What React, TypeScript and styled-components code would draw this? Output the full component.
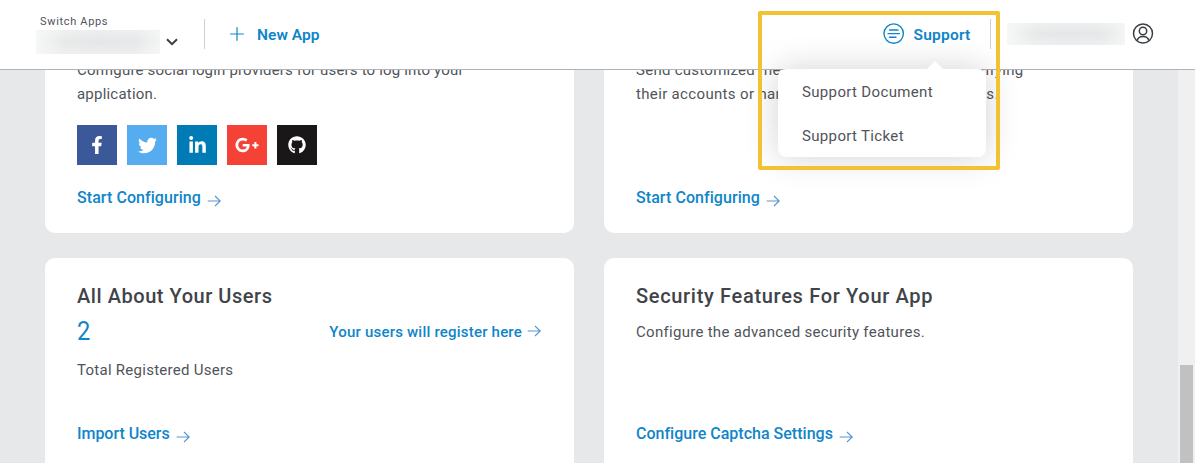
import React from "react";
import styled, { createGlobalStyle } from "styled-components";
import { FaFacebookF, FaTwitter, FaLinkedinIn, FaGooglePlusG, FaGithub } from "react-icons/fa";

const GlobalStyle = createGlobalStyle`
  * { box-sizing: border-box; }
  body {
    margin: 0;
    background: #e7e8ea;
    color: #50545a;
    font: 400 15px/24px Roboto, "Liberation Sans", sans-serif;
    overflow: hidden;
  }
`;

const Page = styled.div`
  height: 463px;
  display: flex;
  flex-direction: column;
  overflow: hidden;
  position: relative;
`;

const Header = styled.header`
  height: 70px;
  flex: none;
  display: flex;
  align-items: flex-start;
  background: #fff;
  border-bottom: 1px solid #b1b2b5;
  position: relative;
  z-index: 2;
`;

const AppSwitcher = styled.div`
  width: 204px;
  padding: 14px 0 0 36px;
  display: flex;
  flex-direction: column;
  flex: none;
`;

const SwitchLabel = styled.span`
  padding-left: 4px;
  font-size: 11px;
  line-height: 16px;
  letter-spacing: 0.67px;
  white-space: nowrap;
`;

const SwitchRow = styled.div`
  display: flex;
  align-items: center;
  gap: 6px;
`;

const Redacted = styled.div<{ $w: number; $h: number }>`
  width: ${(p) => p.$w}px;
  height: ${(p) => p.$h}px;
  flex: none;
  background:
    linear-gradient(180deg, rgba(247, 248, 248, 0.45), rgba(247, 248, 248, 0) 50%, rgba(247, 248, 248, 0.45)),
    linear-gradient(90deg, #f6f7f7, #e7e9e9 24%, #e5e6e8 50%, #e6e8e9 80%, #f3f4f4);
`;

const Divider = styled.div`
  width: 1px;
  height: 30px;
  margin-top: 19px;
  flex: none;
  background: #cfd0d2;
`;

const NavItem = styled.a<{ $gap: number; $track: number }>`
  display: flex;
  align-items: center;
  gap: ${(p) => p.$gap}px;
  height: 24px;
  margin-top: 22px;
  color: #0f85ca;
  font-size: 15.5px;
  font-weight: 600;
  letter-spacing: ${(p) => p.$track}px;
  white-space: nowrap;
  svg { flex: none; }
`;

const NavText = styled.span`
  padding-top: 1px;
`;

const NewApp = styled(NavItem)`
  margin-left: 25px;
`;

const HeaderRight = styled.div`
  margin-left: auto;
  padding-right: 41px;
  display: flex;
`;

const SupportSlot = styled.div`
  position: relative;
  width: 107px;
`;

const Account = styled.div`
  display: flex;
  gap: 7px;
  margin: 23px 0 0 16px;
`;

const Menu = styled.div`
  position: absolute;
  top: 69px;
  right: 4px;
  width: 208px;
  height: 88px;
  padding: 0 24px;
  display: flex;
  flex-direction: column;
  border-radius: 8px;
  background: #fff;
  box-shadow: 0 0 34px rgba(0, 0, 0, 0.18);
  &::before {
    content: "";
    position: absolute;
    top: -8px;
    left: 149px;
    border: solid transparent;
    border-width: 0 8px 8px;
    border-bottom-color: #fff;
  }
`;

const MenuItem = styled.a`
  height: 44px;
  line-height: 46px;
  letter-spacing: 0.34px;
  white-space: nowrap;
`;

const Highlight = styled.div`
  position: absolute;
  z-index: 3;
  left: 758px;
  top: 11px;
  width: 242px;
  height: 159px;
  border: 4px solid #f1c232;
  border-radius: 2px;
`;

const Body = styled.div`
  flex: 1;
  display: flex;
  min-height: 0;
`;

const Cards = styled.main`
  flex: 1;
  display: grid;
  grid-template-columns: 529px 529px;
  grid-template-rows: 163px 240px;
  gap: 25px 30px;
  padding-left: 45px;
  overflow: hidden;
`;

const Card = styled.section<{ $scrolled?: boolean }>`
  display: flex;
  flex-direction: column;
  padding: ${(p) => (p.$scrolled ? "0 32px 23px" : "26px 32px 52px")};
  background: #fff;
  border-radius: ${(p) => (p.$scrolled ? "0 0 10px 10px" : "10px")};
  overflow: hidden;
`;

const Title = styled.h2<{ $track: number }>`
  margin: 0;
  font-size: 20px;
  line-height: 24px;
  font-weight: 500;
  letter-spacing: ${(p) => p.$track}px;
  color: #404449;
`;

const ScrolledText = styled.div`
  margin-top: -12px;
  display: flex;
  flex-direction: column;
`;

const Line = styled.span<{ $track: number }>`
  letter-spacing: ${(p) => p.$track}px;
  white-space: nowrap;
`;

const Description = styled(Line)`
  margin-top: 12px;
`;

const Socials = styled.div`
  display: flex;
  gap: 10px;
  margin-top: 19px;
`;

const Social = styled.a<{ $bg: string }>`
  width: 40px;
  height: 40px;
  display: grid;
  place-items: center;
  background: ${(p) => p.$bg};
  color: #fff;
`;

const Action = styled.a<{ $track: number }>`
  margin-top: auto;
  display: flex;
  align-items: center;
  gap: 6px;
  color: #0f85ca;
  font-size: 16px;
  font-weight: 500;
  letter-spacing: ${(p) => p.$track}px;
  svg { position: relative; top: 3px; }
`;

const CountRow = styled.div`
  display: flex;
  justify-content: space-between;
  align-items: center;
  height: 24px;
  margin-top: 12px;
  padding-right: 1px;
`;

const Count = styled.span`
  color: #0f85ca;
  font-size: 25px;
  transform: scaleX(0.95);
  transform-origin: left;
`;

const RegisterLink = styled.a`
  display: flex;
  align-items: center;
  gap: 5px;
  color: #0f85ca;
  font-weight: 500;
  letter-spacing: 0.21px;
  svg { position: relative; top: -1px; }
`;

const CountLabel = styled(Line)`
  margin-top: 14px;
`;

const Scrollbar = styled.div`
  width: 17px;
  flex: none;
  padding: 295px 2px 0;
  background: #f0f0f0;
`;

const Thumb = styled.div`
  height: 98px;
  width: 13px;
  background: #c1c1c1;
`;

const Arrow = () => (
  <svg width="14" height="12" viewBox="0 0 14 12" fill="none" stroke="#5795d0" strokeWidth="1.1">
    <path d="M.7 6h12.5M8 1l5.200 5-5.200 5" />
  </svg>
);

const socials = [
  { bg: "#3b5998", icon: <FaFacebookF size={18} /> },
  { bg: "#55acee", icon: <FaTwitter size={19} /> },
  { bg: "#007bb6", icon: <FaLinkedinIn size={19} /> },
  { bg: "#f44336", icon: <FaGooglePlusG size={24} /> },
  { bg: "#191717", icon: <FaGithub size={18} /> },
];

export default function App() {
  return (
    <Page>
      <GlobalStyle />
      <Header>
        <AppSwitcher>
          <SwitchLabel>Switch Apps</SwitchLabel>
          <SwitchRow>
            <Redacted $w={124} $h={24} />
            <svg width="12" height="8" viewBox="0 0 12 8" fill="none" stroke="#3b3f44" strokeWidth="2">
              <path d="M1 1.2l5 5 5-5" />
            </svg>
          </SwitchRow>
        </AppSwitcher>
        <Divider />
        <NewApp $gap={13} $track={0.05}>
          <svg width="14" height="14" viewBox="0 0 14 14" stroke="#0f85ca" strokeWidth="1.2">
            <path d="M7 .2v13.600M.2 7h13.600" />
          </svg>
          <NavText>New App</NavText>
        </NewApp>
        <HeaderRight>
          <SupportSlot>
            <NavItem $gap={8.5} $track={0.22}>
              <svg width="22" height="22" viewBox="0 0 22 22" fill="none" stroke="#0f85ca" strokeWidth="1.4">
                <circle cx="10.700" cy="10.600" r="9.700" />
                <path d="M6.500 7h8.500M5 10.600h11.400M6.500 14.200h6.500" strokeLinecap="round" />
              </svg>
              <NavText>Support</NavText>
            </NavItem>
            <Menu>
              <MenuItem>Support Document</MenuItem>
              <MenuItem>Support Ticket</MenuItem>
            </Menu>
          </SupportSlot>
          <Divider />
          <Account>
            <Redacted $w={118} $h={22} />
            <svg width="22" height="22" viewBox="0 0 22 22" fill="none" stroke="#3b3f44" strokeWidth="1.5">
              <circle cx="11" cy="10.5" r="9.5" />
              <circle cx="11" cy="8" r="3.7" />
              <path d="M5.2 17.6c.6-2.6 2.6-4 5.8-4s5.200 1.400 5.800 4" />
            </svg>
          </Account>
        </HeaderRight>
      </Header>
      <Body>
        <Cards>
          <Card $scrolled>
            <ScrolledText>
              <Line $track={0.175}>Configure social login providers for users to log into your</Line>
              <Line $track={0.21}>application.</Line>
            </ScrolledText>
            <Socials>
              {socials.map((s) => (
                <Social key={s.bg} $bg={s.bg}>{s.icon}</Social>
              ))}
            </Socials>
            <Action $track={0.065}>Start Configuring <Arrow /></Action>
          </Card>
          <Card $scrolled>
            <ScrolledText>
              <Line $track={0.265}>Send customized messages to your users after verifying</Line>
              <Line $track={0.34}>their accounts or handling password reset requests.</Line>
            </ScrolledText>
            <Action $track={0.065}>Start Configuring <Arrow /></Action>
          </Card>
          <Card>
            <Title $track={0.55}>All About Your Users</Title>
            <CountRow>
              <Count>2</Count>
              <RegisterLink>Your users will register here <Arrow /></RegisterLink>
            </CountRow>
            <CountLabel $track={0.27}>Total Registered Users</CountLabel>
            <Action $track={-0.03}>Import Users <Arrow /></Action>
          </Card>
          <Card>
            <Title $track={0.68}>Security Features For Your App</Title>
            <Description $track={0.29}>Configure the advanced security features.</Description>
            <Action $track={0.01}>Configure Captcha Settings <Arrow /></Action>
          </Card>
        </Cards>
        <Scrollbar>
          <Thumb />
        </Scrollbar>
      </Body>
      <Highlight />
    </Page>
  );
}
